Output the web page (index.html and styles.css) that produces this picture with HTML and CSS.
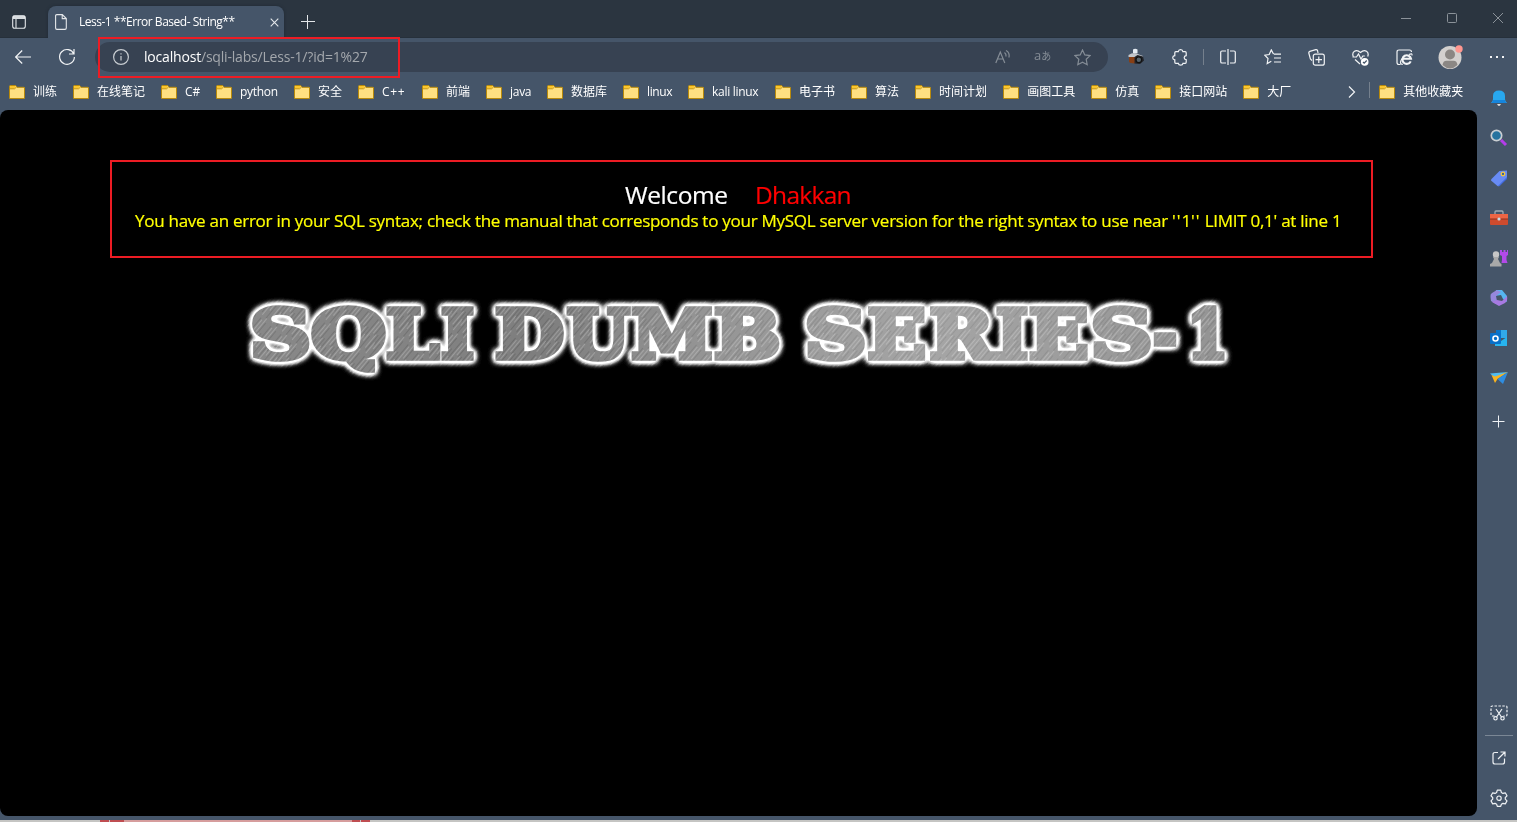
FILE: index.html
```html
<!DOCTYPE html>
<html lang="zh-CN">
<head>
<meta charset="utf-8">
<title>Less-1 **Error Based- String**</title>
<link rel="stylesheet" href="styles.css">
</head>
<body>
<svg class="defs" width="0" height="0" aria-hidden="true">
  <symbol id="folder" viewBox="0 0 16 14">
    <path d="M.5 1.5q0-1 1-1h4.700q.8 0 1.100.7l.5 1.100H15q.5 0 .5.6V13q0 .5-.6.5H1.100q-.6 0-.6-.5z" fill="#ffe081" stroke="#b98a0b"/>
    <path d="M1 3.700V1.600Q1 1 1.600 1h4.500l.8.9-1.500 1.800z" fill="#fac62e"/>
    <path d="M1 3.800h4.500L7 2.600" fill="none" stroke="#b98a0b" stroke-width=".8"/>
  </symbol>
</svg>
<div class="browser">
  <header class="tabs">
    <svg class="workspace" width="14" height="14" viewBox="0 0 14 14"><rect x=".7" y=".7" width="12.6" height="12.6" rx="2"/><path d="M1 3.200h12M4 4v9" /><path d="M1.500 1.200h11v2h-11z" fill="#d2d5d9"/></svg>
    <div class="tab">
      <svg width="12" height="16" viewBox="0 0 12 16"><path d="M1.800.6h5.500l4 4v9.500q0 1.300-1.300 1.300H1.900Q.6 15.400.6 14.100V1.800Q.6.6 1.800.6zM7.200.6v4h4"/></svg>
      <span class="tab-title">Less-1 **Error Based- String**</span>
      <svg class="tab-close" width="9" height="9" viewBox="0 0 9 9"><path d="M.7.7l7.600 7.600M8.300.7L.7 8.300"/></svg>
    </div>
    <svg class="new-tab" width="14" height="14" viewBox="0 0 14 14"><path d="M6.500 0v14M0 6.500h14"/></svg>
    <div class="window-buttons">
      <svg width="10" height="10" viewBox="0 0 10 10"><path d="M0 5.500h10"/></svg>
      <svg width="10" height="10" viewBox="0 0 10 10"><rect x=".5" y=".5" width="9" height="9" rx="1"/></svg>
      <svg width="10" height="10" viewBox="0 0 10 10"><path d="M0 0l10 10M10 0L0 10"/></svg>
    </div>
  </header>

  <nav class="toolbar">
    <svg class="back" width="16" height="14" viewBox="0 0 16 14"><path d="M16 7H.8M7.200.5L.7 7l6.500 6.500"/></svg>
    <svg class="reload" width="18" height="18" viewBox="0 0 18 18"><path d="M15.800 6A7.400 7.400 0 1 0 16.400 9M16 1v5h-5"/></svg>
    <div class="address">
      <svg class="info" width="16" height="16" viewBox="0 0 16 16"><circle cx="8" cy="8" r="7.400"/><path d="M8 7v4.500M8 4.300v1.300"/></svg>
      <span class="url"><b>localhost</b>/sqli-labs/Less-1/?id=1%27</span>
      <div class="address-tools">
        <svg width="16" height="16" viewBox="0 0 16 16"><path d="M.8 14L5.300 3l4.500 11M2.500 10h5.700M9.500 3.500q2 1.500 1.500 4M11 1.500q4 2 3 7"/></svg>
        <span class="translate">a<small>あ</small></span>
        <svg width="17" height="17" viewBox="0 0 17 17"><path d="M8.500 1l2.300 4.900 5.300.7-3.900 3.700 1 5.400-4.700-2.600-4.700 2.600 1-5.400L.9 6.600l5.300-.7z"/></svg>
      </div>
    </div>
    <div class="tools">
      <svg width="18" height="18" viewBox="0 0 18 18"><path d="M6 5V1.500Q8 0 10.500 1.500V5z" fill="#e6edf4" stroke="none"/><path d="M1.500 7Q7 3.500 12 6.500l4 1.500v1H1.500z" fill="#c1c6cc" stroke="none"/><path d="M2 9h6v6.500l-4.500-.5L2 14z" fill="#873f15" stroke="none"/><path d="M7.500 9l3-2 5.500 1.500 1 4-4 3.500-5.500-.5z" fill="#22242a" stroke="none"/><circle cx="11.800" cy="11.800" r="2.800" fill="#55636c" stroke="#111"/></svg>
      <svg width="17" height="17" viewBox="0 0 17 17"><path d="M3.800 2.700h2.500c.3-2.700 4.300-2.700 4.600 0h2.300q1 0 1 1v3c-2.700.2-2.700 3.700 0 4v2.600q0 1-1 1H11c-.4 2.500-4.300 2.500-4.700 0H3.800q-1 0-1-1v-2.500C0 10.500 0 7 2.800 6.700v-3q0-1 1-1z"/></svg>
      <span class="divider"></span>
      <svg width="16" height="16" viewBox="0 0 16 16"><path d="M6 2H2Q.7 2 .7 3.300v9.400Q.7 14 2 14h4M10 2h4q1.300 0 1.300 1.300v9.400Q15.300 14 14 14h-4M8 0v16"/></svg>
      <svg width="17" height="16" viewBox="0 0 17 16"><path d="M9.500 5L7.300.9 5.200 5.500l-4.500.7L4 9.500l-.8 5 4.100-2.300M9.800 5.200H17M10 9h7M10 13h7"/></svg>
      <svg width="17" height="17" viewBox="0 0 17 17"><path d="M4 11.500L2.400 10 .8 4q-.2-1.200 1-1.600l6-1.700Q9 .4 9.500 1.500L10 4"/><rect x="5.300" y="5.200" width="11" height="11" rx="2"/><path d="M10.800 7.500v6.500M7.500 10.700H14"/></svg>
      <svg width="17" height="17" viewBox="0 0 17 17"><path d="M1.300 7.500C-.6 3 4-.5 8.500 3.500 13-.5 17.500 3 15.700 7.500M.5 8h4l2-3 2.500 5 1.800-3h2M3 10.500L8 15"/><circle cx="12.700" cy="12.900" r="3.800" fill="#fff" stroke="none"/><path d="M11 13l1.200 1.200 2.500-2.700" stroke="#455569"/></svg>
      <svg width="17" height="17" viewBox="0 0 17 17"><path d="M4.500 15.500H3Q1 15.500 1 13.500V3Q1 1 3 1h10.500q2 0 2 2"/><path d="M14.700 12.300A4.300 4.300 0 1 1 15 9.800H7.500" stroke-width="2.100"/><path d="M13 5.500q3.500-1.800 3 1M6 9.500q-3.500 6 .8 5.800"/></svg>
      <svg class="avatar" width="26" height="24" viewBox="0 0 26 24"><g stroke="none"><circle cx="12" cy="12.500" r="11.500" fill="#d3d0ce"/><circle cx="12" cy="9.500" r="5" fill="#8b8784"/><path d="M4.500 20q.5-4.300 4-4.300h7q3.500 0 4 4.300-7.500 7-15 0z" fill="#8b8784"/><circle cx="21" cy="4" r="3.700" fill="#ff9790"/></g></svg>
      <svg width="14" height="4" viewBox="0 0 14 4"><path d="M0 1h2v2H0zM6 1h2v2H6zM12 1h2v2h-2z" fill="#f3f4f6" stroke="none"/></svg>
    </div>
  </nav>

  <div class="workarea">
    <div class="left">
      <div class="bookmarks">
        <span class="mark"><svg><use href="#folder"/></svg><span>训练</span></span>
        <span class="mark"><svg><use href="#folder"/></svg><span>在线笔记</span></span>
        <span class="mark"><svg><use href="#folder"/></svg><span class="w-csharp">C#</span></span>
        <span class="mark"><svg><use href="#folder"/></svg><span class="w-python">python</span></span>
        <span class="mark"><svg><use href="#folder"/></svg><span>安全</span></span>
        <span class="mark"><svg><use href="#folder"/></svg><span class="w-cpp">C++</span></span>
        <span class="mark"><svg><use href="#folder"/></svg><span>前端</span></span>
        <span class="mark"><svg><use href="#folder"/></svg><span class="w-java">java</span></span>
        <span class="mark"><svg><use href="#folder"/></svg><span>数据库</span></span>
        <span class="mark"><svg><use href="#folder"/></svg><span class="w-linux">linux</span></span>
        <span class="mark"><svg><use href="#folder"/></svg><span class="w-kali">kali linux</span></span>
        <span class="mark"><svg><use href="#folder"/></svg><span>电子书</span></span>
        <span class="mark"><svg><use href="#folder"/></svg><span>算法</span></span>
        <span class="mark"><svg><use href="#folder"/></svg><span>时间计划</span></span>
        <span class="mark"><svg><use href="#folder"/></svg><span>画图工具</span></span>
        <span class="mark"><svg><use href="#folder"/></svg><span>仿真</span></span>
        <span class="mark"><svg><use href="#folder"/></svg><span>接口网站</span></span>
        <span class="mark"><svg><use href="#folder"/></svg><span>大厂</span></span>
        <svg class="more" viewBox="0 0 8 12"><path d="M1 .5L6.500 6 1 11.500"/></svg>
        <span class="divider"></span>
        <span class="mark others"><svg><use href="#folder"/></svg><span>其他收藏夹</span></span>
      </div>
      <main class="page">
        <section class="message">
          <h1><span class="welcome">Welcome</span><span class="name">Dhakkan</span></h1>
          <p>You have an error in your SQL syntax; check the manual that corresponds to your MySQL server version for the right syntax to use near <span class="quotes">''</span>1<span class="quotes">''</span> LIMIT 0,1' at line 1</p>
        </section>
        <svg class="banner" width="1000" height="100" viewBox="240 285 1000 100">
          <defs>
            <linearGradient id="metal" gradientUnits="userSpaceOnUse" x1="250" y1="300" x2="1226" y2="366">
              <stop offset="0" stop-color="#898989"/><stop offset=".3" stop-color="#7e7e7e"/><stop offset=".45" stop-color="#939393"/><stop offset=".7" stop-color="#a5a5a5"/><stop offset="1" stop-color="#939393"/>
            </linearGradient>
            <filter id="steel" filterUnits="userSpaceOnUse" x="240" y="285" width="1000" height="100" color-interpolation-filters="sRGB">
              <feGaussianBlur in="SourceAlpha" stdDeviation="3.100" result="soft"/>
              <feComponentTransfer in="soft" result="wide"><feFuncA type="table" tableValues="0 .7 1 1 1 1 1 1"/></feComponentTransfer>
              <feFlood flood-color="#fff"/><feComposite in2="wide" operator="in" result="halo"/>
              <feMerge><feMergeNode in="halo"/><feMergeNode in="SourceGraphic"/></feMerge>
            </filter>
            <pattern id="brush" width="37" height="13" patternUnits="userSpaceOnUse" patternTransform="rotate(-50)">
              <path d="M0 1.500h14M8 4.500h25M20 7.500h17M4 10.500h17" stroke="#fff" stroke-opacity=".22"/><path d="M12 2.500h22M0 6.500h16M19 9.500h14M2 12.500h20" stroke="#000" stroke-opacity=".14"/>
            </pattern>
          </defs>
          <g class="letters" filter="url(#steel)">
            <g class="word">
              <text x="250" y="359.500" textLength="61" lengthAdjust="spacingAndGlyphs">S</text>
              <text x="311" y="359.500" textLength="75" lengthAdjust="spacingAndGlyphs">Q</text>
              <text x="386" y="359.500" textLength="53" lengthAdjust="spacingAndGlyphs">L</text>
              <text x="441" y="359.500" textLength="33" lengthAdjust="spacingAndGlyphs">I</text>
            </g>
            <g class="word">
              <text x="495" y="359.500" textLength="69" lengthAdjust="spacingAndGlyphs">D</text>
              <text x="567" y="359.500" textLength="62.500" lengthAdjust="spacingAndGlyphs">U</text>
              <text x="631.500" y="359.500" textLength="81" lengthAdjust="spacingAndGlyphs">M</text>
              <text x="714" y="359.500" textLength="66.500" lengthAdjust="spacingAndGlyphs">B</text>
            </g>
            <g class="word">
              <text x="804.500" y="359.500" textLength="62" lengthAdjust="spacingAndGlyphs">S</text>
              <text x="867.500" y="359.500" textLength="58.500" lengthAdjust="spacingAndGlyphs">E</text>
              <text x="929.500" y="359.500" textLength="64" lengthAdjust="spacingAndGlyphs">R</text>
              <text x="996" y="359.500" textLength="32" lengthAdjust="spacingAndGlyphs">I</text>
              <text x="1029" y="359.500" textLength="59.500" lengthAdjust="spacingAndGlyphs">E</text>
              <text x="1090.500" y="359.500" textLength="62" lengthAdjust="spacingAndGlyphs">S</text>
              <text x="1153" y="359.500" textLength="24" lengthAdjust="spacingAndGlyphs">-</text>
              <text x="1187" y="359.500" textLength="41" lengthAdjust="spacingAndGlyphs">1</text>
            </g>
          </g>
          <rect class="grain" x="240" y="285" width="1000" height="100" fill="url(#brush)"/>
        </svg>
      </main>
    </div>

    <aside class="sidebar">
      <svg viewBox="0 0 18 18"><path d="M1 14q2-1.500 2-4V7q0-5.500 6-5.500T15 7v3q0 2.500 2 4z" fill="#28a8ef"/><path d="M1 14q2-1 2.200-3h11.600q.2 2 2.200 3z" fill="#1685dc"/><path d="M7 15h4q-2 4-4 0z" fill="#ddd"/></svg>
      <svg viewBox="0 0 18 18"><path d="M11 11l5 5" stroke="#b53ceb" stroke-width="3"/><circle cx="6.500" cy="6.500" r="5.200" fill="#26739f" stroke="#c9ced2" stroke-width="1.700"/></svg>
      <svg viewBox="0 0 18 18"><path d="M1 10.500L9.500 2 17 1.500V9l-7.500 8q-1 .5-2 0L1 11.500z" fill="#688bf4"/><path d="M8 17l9-9v2l-7.500 7z" fill="#406adb"/><circle cx="13" cy="5" r="1.800" fill="#375e9c" stroke="#f6c739" stroke-width="1.300"/></svg>
      <svg viewBox="0 0 18 18"><path d="M5 5V3q0-1 1-1h6q1 0 1 1v2" fill="none" stroke="#9eaab2" stroke-width="1.300"/><rect y="5" width="18" height="11" rx="1" fill="#cd4b2e"/><path d="M0 5h18v5H0z" fill="#ed6544"/><path d="M0 10h18" stroke="#8f321f"/><circle cx="9" cy="10" r="1.600" fill="#c8dbe5"/></svg>
      <svg viewBox="0 0 18 18"><path d="M10 1h2v2h1.500V1h2v2H17V1h1v5l-1.500 1v4l1 3h-6l.5-3V7L10 6z" fill="#b34ae9"/><circle cx="6" cy="5.500" r="3.200" fill="#c6c6c6"/><path d="M3 8h6l-1 2 2 4 1.500 1v2.500H0V15l2-1 2-4z" fill="#a9a9a9"/></svg>
      <svg viewBox="0 0 18 18"><path d="M6 1h6l5 6v6l-4-3-2-4-6 1z" fill="#55b5ef"/><path d="M7 1L2 4Q0 5 .5 8l.5 4 5 3 1-3-1-5 5-4z" fill="#9587dc"/><path d="M17 7q1 5-2 7l-6 3-7-4 5-2 5 1z" fill="#a77ae2"/></svg>
      <svg viewBox="0 0 18 18"><path d="M6 1h11v8H6z" fill="#31a9e9"/><path d="M6 1h5v4H6z" fill="#0875c9"/><path d="M5 8l6 4 6-4v9H5z" fill="#27b4ef"/><rect x="0" y="4" width="11" height="11" rx="1" fill="#0870c9"/><circle cx="5.500" cy="9.500" r="2.500" fill="none" stroke="#fff" stroke-width="1.600"/></svg>
      <svg viewBox="0 0 18 18"><path d="M0 4.500L18 3 5 9z" fill="#50bdf2"/><path d="M1.500 6L5 14l2.500-4L18 3 5 7.500z" fill="#f9b41f"/><path d="M7.500 10L18 3l-5 12z" fill="#2f8de0"/></svg>
      <svg class="line add" viewBox="0 0 18 18"><path d="M8.500 2.500v12M2.500 8.500h12"/></svg>
      <svg class="line capture" viewBox="0 0 18 18"><path d="M4.500 12H2.200Q1 12 1 10.800V3.200Q1 2 2.200 2h13.600Q17 2 17 3.200v7.600q0 1.200-1.200 1.200h-2.300" stroke-dasharray="2.500 1.400"/><path d="M6 5l5.500 8M12 5l-5.500 8"/><circle cx="5.500" cy="14.300" r="1.700"/><circle cx="12.500" cy="14.300" r="1.700"/></svg>
      <span class="rule"></span>
      <svg class="line" viewBox="0 0 18 18"><path d="M8 3.500H5Q3 3.500 3 5.500V13q0 2 2 2h7.500q2 0 2-2V9.500M10.500 3H15v4.500M15 3L8 10"/></svg>
      <svg class="line" viewBox="0 0 18 18"><path d="M7.300 1.200h3.400l.7 2.300 1.500.9 2.400-.6 1.700 3-1.700 1.700v1.700l1.700 1.700-1.700 3-2.400-.6-1.500.9-.7 2.100H7.300l-.7-2.100-1.500-.9-2.400.6-1.700-3 1.700-1.700V8.500L1 6.800l1.700-3 2.400.6 1.500-.9z" stroke-linejoin="round"/><circle cx="9" cy="9.200" r="2.200"/></svg>
    </aside>
  </div>
  <footer class="taskbar"><i class="r1"></i><i class="r2"></i><i class="pink"></i><i class="r3"></i><i class="r4"></i></footer>
</div>
<div class="url-outline"></div>
</body>
</html>
```
FILE: styles.css
```css
* { box-sizing: border-box; }
body { margin: 0; width: 1517px; height: 822px; overflow: hidden; background: #455569; color: #fff; font: 12px "Open Sans", "Noto Sans CJK SC", sans-serif; }
svg { display: block; flex: none; }
.defs { display: none; }
.browser { display: flex; flex-direction: column; height: 822px; }

.tabs { display: flex; height: 38px; background: #2b3540; border-bottom: 1px solid #26303b; }
.tabs svg { fill: none; stroke: #e4e7ea; stroke-width: 1.1; }
.tabs .workspace { margin: 15px 0 0 12px; }
.tab { display: flex; align-items: center; width: 236px; height: 32px; margin: 6px 0 0 22px; padding: 0 5px 0 7px; background: #455569; border-radius: 8px 8px 0 0; box-shadow: 0 0 3px #202a34; }
.tab-title { width: 157px; margin: -1px 0 0 12px; font-size: 12px; letter-spacing: -.49px; white-space: nowrap; }
.tabs .tab-close { margin-left: auto; }
.tabs .new-tab { margin: 15px 0 0 17px; stroke-width: 1; }
.window-buttons { display: flex; gap: 36px; margin: 13px 14px 0 auto; }
.window-buttons svg { stroke: #8b9299; stroke-width: 1; }

.toolbar { display: flex; align-items: center; height: 38px; flex: none; background: #455569; }
.toolbar svg { fill: none; stroke: #f1f3f5; stroke-width: 1.2; }
.toolbar .back { margin-left: 15px; }
.toolbar .reload { margin-left: 27px; }
.address { display: flex; align-items: center; width: 1013px; height: 30px; margin-left: 19px; padding: 0 17px 0 18px; background: #374252; border-radius: 15px; }
.url { width: 226px; margin: -1px 0 0 15px; color: #a4a8ad; font-size: 14px; white-space: nowrap; letter-spacing: -.19px; }
.url b { color: #fff; font-weight: 400; }
.toolbar .info { stroke: #c8cdd2; }
.address-tools { display: flex; align-items: center; gap: 23px; margin-left: auto; }
.address-tools svg { stroke: #858d96; }
.translate { width: 17px; margin-top: -3px; color: #858d96; font: 13px/16px "Open Sans", "Noto Sans CJK JP", sans-serif; white-space: nowrap; }
.translate small { font-size: 10px; }
.tools { display: grid; grid-template-columns: 55px 34px 13px 36px 53px 35px 53px 35px 57px 35px; flex: 1; align-items: center; justify-items: center; }
.divider { flex: none; width: 1px; height: 16px; background: #75808d; }

.workarea { display: flex; height: 744px; }
.left { display: flex; flex-direction: column; width: 1477px; }
.bookmarks { display: flex; align-items: center; height: 34px; padding: 0 0 3px 9px; }
.mark { display: flex; flex: none; align-items: center; gap: 8px; margin-right: 16px; white-space: nowrap; line-height: 18px; }
.others { margin-right: 0; }
.mark svg { width: 16px; height: 14px; }
.w-csharp { width: 15px; }
.w-python { width: 38px; letter-spacing: -.3px; }
.w-cpp { width: 24px; letter-spacing: .7px; }
.w-java { width: 21px; letter-spacing: -.3px; }
.w-linux { width: 25px; letter-spacing: -.4px; }
.w-kali { width: 47px; letter-spacing: -.3px; }
.bookmarks .more { width: 8px; height: 12px; margin: 0 13px 0 41px; fill: none; stroke: #f1f3f5; stroke-width: 1.2; }
.bookmarks .divider { margin-right: 9px; margin-top: -3px; }

.page { height: 706px; padding-top: 50px; background: #000; border-radius: 8px; }
.message { width: 1263px; height: 98px; margin-left: 110px; padding: 17px 0 0 23px; border: 2px solid #ed1c24; font-family: "Open Sans", sans-serif; -webkit-text-stroke: .2px currentColor; }
.message h1 { display: flex; margin: 0 0 1px 490px; font-size: 24.5px; line-height: 32px; font-weight: 400; }
.welcome { width: 130px; color: #fff; letter-spacing: -.4px; }
.name { color: #f00; letter-spacing: -.7px; }
.message p { margin: 0; color: #ff0; font-size: 17px; line-height: 18px; white-space: nowrap; letter-spacing: -.267px; }
.quotes { letter-spacing: 1px; }
.banner { margin: 25px 0 0 240px; }
.letters { font: 700 68px "DejaVu Serif", serif; fill: url(#metal); stroke: url(#metal); stroke-width: 5.5; }
.grain { mix-blend-mode: overlay; }

.sidebar { display: flex; flex-direction: column; width: 40px; padding: 2px 0 2px 4px; }
.sidebar svg { width: 36px; height: 40px; padding: 11px 9px; }
.sidebar .line { fill: none; stroke: #eef1f4; stroke-width: 1.2; }
.sidebar .add { height: 48px; padding-top: 15px; padding-bottom: 15px; stroke-width: 1; }
.sidebar .capture { margin-top: auto; }
.rule { width: 28px; height: 1px; margin: 2px 0 2px 4px; background: #7b8795; flex: none; }
.taskbar { display: flex; height: 2px; background: #c5c5c3; padding-left: 100px; }
.taskbar i { height: 2px; background: #bf4d51; }
.r1 { width: 9px; }
.taskbar .r2 { width: 14px; margin-left: 1px; }
.taskbar .pink { width: 228px; background: #d69d9d; }
.r3 { width: 8px; }
.taskbar .r4 { width: 9px; margin-left: 1px; }
.url-outline { position: absolute; left: 98px; top: 37px; width: 302px; height: 41px; border: 2px solid #ed1c24; }
```
